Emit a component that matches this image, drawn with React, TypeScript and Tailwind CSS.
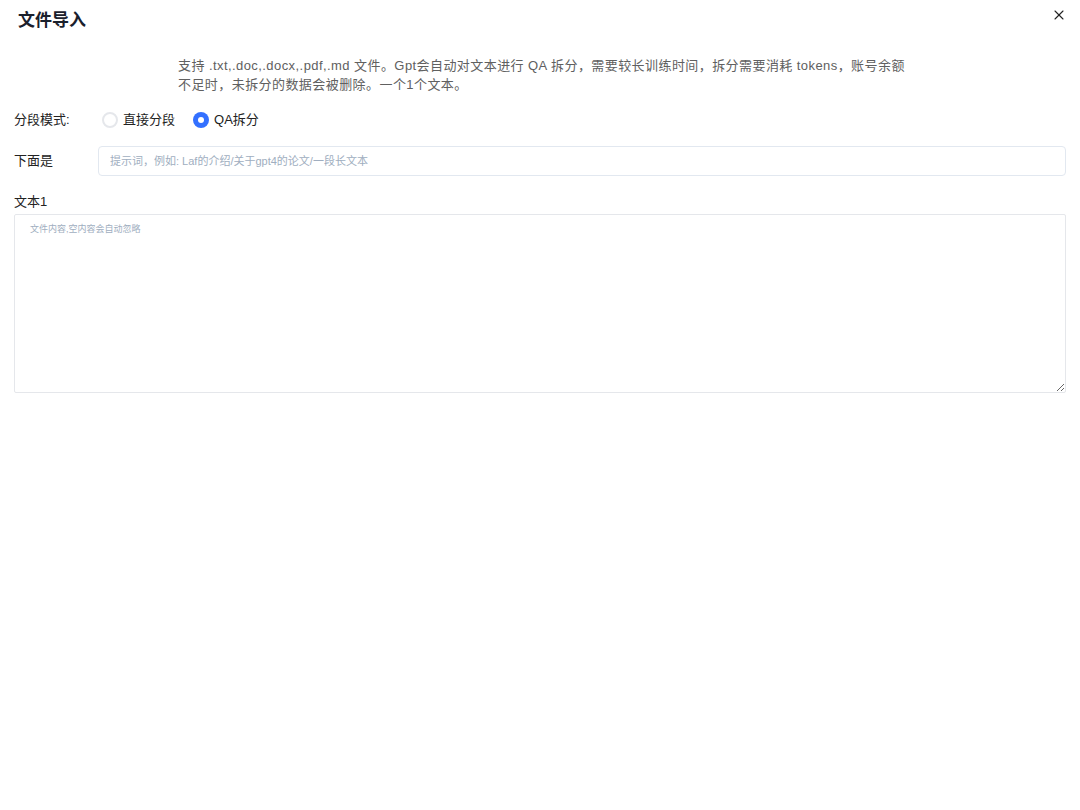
import { X } from 'lucide-react'

const font = { fontFamily: '"Liberation Sans", "Noto Sans CJK SC", sans-serif' }

function Radio({ label, checked }: { label: string; checked?: boolean }) {
  return (
    <label className="flex items-center gap-[5px] cursor-pointer">
      {checked ? (
        <span className="w-4 h-4 rounded-full bg-[#3370ff] flex items-center justify-center">
          <span className="w-[6px] h-[6px] rounded-full bg-white" />
        </span>
      ) : (
        <span className="w-4 h-4 rounded-full border-2 border-[#e5e7eb] bg-white" />
      )}
      <span className="text-[13px] text-[#222]">{label}</span>
    </label>
  )
}

export default function App() {
  return (
    <div className="relative w-[1080px] h-[810px] bg-white" style={font}>
      <div className="px-[18px] pt-[9px]">
        <h1 className="text-[17px] leading-[24px] font-semibold text-[#1a202c]">文件导入</h1>
      </div>
      <button className="absolute top-[5px] right-[11px] p-0.5 text-[#222]" aria-label="关闭">
        <X size={16} strokeWidth={1.6} />
      </button>

      <div className="px-[14px]">
        <p className="mt-[23px] pl-[164px] text-[13px] leading-[19px] tracking-[0.43px] text-[#606060] whitespace-nowrap">
          <span className="block">支持 .txt,.doc,.docx,.pdf,.md 文件。Gpt会自动对文本进行 QA 拆分，需要较长训练时间，拆分需要消耗 tokens，账号余额</span>
          <span className="block">不足时，未拆分的数据会被删除。一个1个文本。</span>
        </p>

        <div className="mt-[16px] flex items-center h-5">
          <span className="w-[88px] text-[13px] text-[#222]">分段模式:</span>
          <div className="flex items-center gap-[18px]">
            <Radio label="直接分段" />
            <Radio label="QA拆分" checked />
          </div>
        </div>

        <div className="mt-[16px] flex items-center">
          <span className="w-[84px] text-[13px] text-[#222]">下面是</span>
          <input
            className="flex-1 h-[30px] px-[11px] border border-[#e2e8f0] rounded-[4px] text-[11px] outline-none placeholder:text-[#a0aec0]"
            placeholder="提示词，例如: Laf的介绍/关于gpt4的论文/一段长文本"
          />
        </div>

        <div className="mt-[16px] text-[13px] leading-[20px] text-[#222]">文本1</div>
        <textarea
          className="mt-[2px] block w-full h-[179px] px-[15px] py-[8px] border border-[#e5e7eb] rounded-[2px] text-[9px] outline-none placeholder:text-[#a0aec0]"
          placeholder="文件内容,空内容会自动忽略"
        />
      </div>
    </div>
  )
}
